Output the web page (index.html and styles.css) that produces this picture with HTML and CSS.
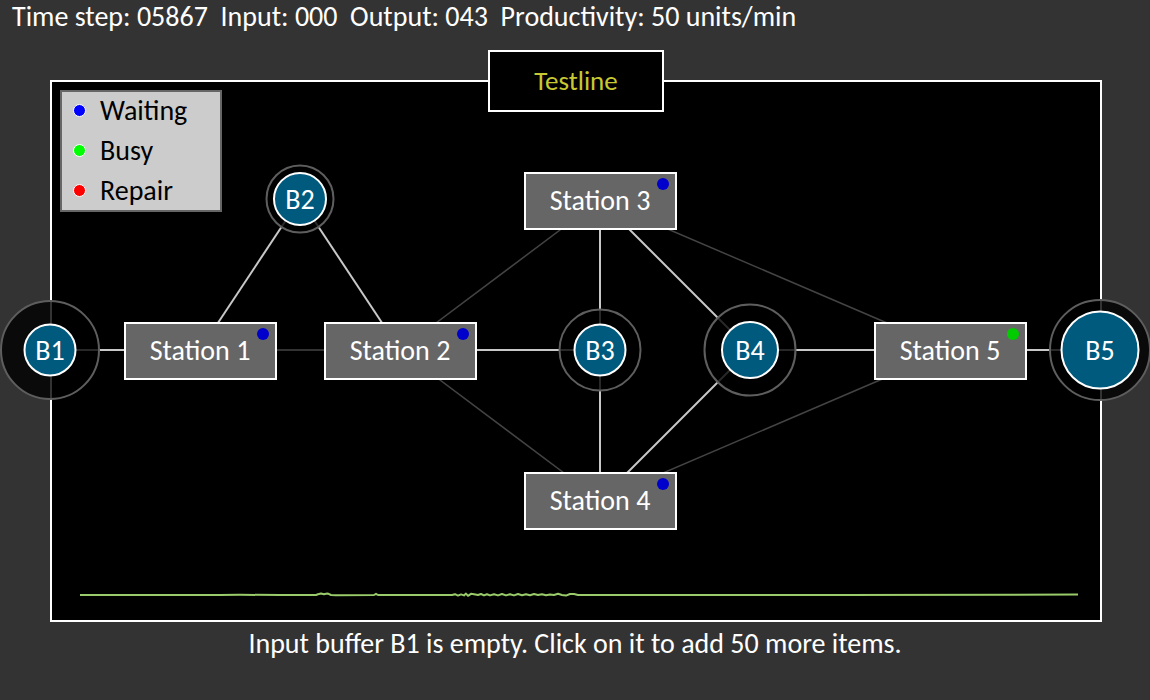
FILE: index.html
```html
<!DOCTYPE html>
<html>
<head>
<meta charset="utf-8">
<link rel="stylesheet" href="styles.css">
</head>
<body>
<div class="app">
  <div class="status">Time step: 05867&nbsp; Input: 000&nbsp; Output: 043&nbsp; Productivity: 50 units/min</div>
  <div class="stage">
    <div class="frame">
      <svg class="chart" width="998" height="12" viewBox="0 0 998 12">
        <polyline class="chart-line" points="0,6 140,6 160,5.8 200,6 236,6 238,5.2 241,4.6 244,5.2 246,4.8 248,4.6 251,6 256,6.2 294,6 296,4.8 298,6 372,6 375,5.2 378,6.6 381,5.4 384,6.4 386,4.6 388,6.8 391,4.8 394,5.2 398,6 401,5 404,6.4 407,5.2 410,6.4 414,5.2 418,6.4 422,5 426,6.4 430,5.2 434,6.4 438,5 442,6.2 446,5.2 450,6.2 454,5 458,6 462,5.2 466,6.2 470,5.4 474,6 478,4.8 482,6 486,6.6 490,5 494,5 498,6 560,6 700,6 760,6 998,5.6"/>
      </svg>
    </div>
    <svg class="diagram" width="1150" height="590" viewBox="0 40 1150 590">
      <g class="dark">
        <line x1="277" y1="350" x2="325" y2="350"/>
        <line x1="400" y1="350" x2="600" y2="200"/>
        <line x1="400" y1="350" x2="600" y2="500"/>
        <line x1="600" y1="200" x2="950" y2="350"/>
        <line x1="600" y1="500" x2="950" y2="350"/>
      </g>
      <g class="light">
        <line x1="50" y1="350" x2="125" y2="350"/>
        <line x1="200" y1="350" x2="300" y2="199"/>
        <line x1="300" y1="199" x2="400" y2="350"/>
        <line x1="477" y1="350" x2="600" y2="350"/>
        <line x1="600" y1="229" x2="600" y2="472"/>
        <line x1="600" y1="200" x2="750" y2="350"/>
        <line x1="750" y1="350" x2="600" y2="500"/>
        <line x1="750" y1="350" x2="875" y2="350"/>
        <line x1="1027" y1="350" x2="1100" y2="350"/>
      </g>

      <g class="buffer">
        <circle class="outer" cx="50" cy="350" r="49"/>
        <circle class="inner" cx="50" cy="350" r="25.5"/>
        <text x="50" y="350">B1</text>
      </g>
      <g class="buffer">
        <circle class="outer" cx="300" cy="199" r="33.5"/>
        <circle class="inner" cx="300" cy="199" r="26"/>
        <text x="300" y="199">B2</text>
      </g>
      <g class="buffer">
        <circle class="outer" cx="600" cy="350" r="40.5"/>
        <circle class="inner" cx="600" cy="350" r="25.5"/>
        <text x="600" y="350">B3</text>
      </g>
      <g class="buffer">
        <circle class="outer" cx="750" cy="350" r="45.5"/>
        <circle class="inner" cx="750" cy="350" r="28"/>
        <text x="750" y="350">B4</text>
      </g>
      <g class="buffer">
        <circle class="outer" cx="1100" cy="350" r="50"/>
        <circle class="inner" cx="1100" cy="350" r="38.5"/>
        <text x="1100" y="350">B5</text>
      </g>

      <g class="station">
        <rect x="125" y="323" width="151" height="56"/>
        <text x="200" y="350">Station 1</text>
        <circle class="dot waiting" cx="263" cy="334" r="6"/>
      </g>
      <g class="station">
        <rect x="325" y="323" width="151" height="56"/>
        <text x="400" y="350">Station 2</text>
        <circle class="dot waiting" cx="463" cy="334" r="6"/>
      </g>
      <g class="station">
        <rect x="525" y="173" width="151" height="56"/>
        <text x="600" y="200">Station 3</text>
        <circle class="dot waiting" cx="663" cy="184" r="6"/>
      </g>
      <g class="station">
        <rect x="525" y="473" width="151" height="56"/>
        <text x="600" y="500">Station 4</text>
        <circle class="dot waiting" cx="663" cy="484" r="6"/>
      </g>
      <g class="station">
        <rect x="875" y="323" width="151" height="56"/>
        <text x="950" y="350">Station 5</text>
        <circle class="dot busy" cx="1013" cy="334" r="6"/>
      </g>
    </svg>
    <div class="title">Testline</div>
    <div class="legend">
      <div class="legend-item"><span class="ldot waiting-bg"></span>Waiting</div>
      <div class="legend-item"><span class="ldot busy-bg"></span>Busy</div>
      <div class="legend-item"><span class="ldot repair-bg"></span>Repair</div>
    </div>
  </div>
  <div class="message">Input buffer B1 is empty. Click on it to add 50 more items.</div>
</div>
</body>
</html>
```

FILE: styles.css
```css
html, body {
  margin: 0;
  padding: 0;
  background: #333333;
}
body {
  width: 1150px;
  height: 700px;
  overflow: hidden;
  font-family: Carlito, Calibri, Lato, "Open Sans", sans-serif;
  color: #ffffff;
}
.app {
  display: flex;
  flex-direction: column;
}
.status {
  height: 40px;
  box-sizing: border-box;
  padding: 0 0 0 12px;
  font-size: 28px;
  line-height: 34px;
  white-space: pre;
}
.stage {
  position: relative;
  height: 582px;
}
.frame {
  margin: 40px 0 0 50px;
  width: 1052px;
  height: 542px;
  box-sizing: border-box;
  border: 2px solid #ffffff;
  background: #000000;
  display: flex;
  flex-direction: column;
  justify-content: flex-end;
  padding: 0 0 19px 28px;
}
.chart {
  display: block;
}
.chart-line {
  fill: none;
  stroke: #9acb6a;
  stroke-width: 2;
  stroke-linejoin: round;
}
.diagram {
  position: absolute;
  left: 0;
  top: 0;
  overflow: visible;
}
.dark line {
  stroke: #444444;
  stroke-width: 1.5;
}
.light line {
  stroke: #c8c8c8;
  stroke-width: 2;
}
.buffer .outer {
  fill: rgba(0, 0, 0, 0.8);
  stroke: #5e5e5e;
  stroke-width: 2;
}
.buffer .inner {
  fill: #005a7e;
  stroke: #ffffff;
  stroke-width: 2;
}
.diagram text {
  fill: #ffffff;
  font-family: Carlito, Calibri, Lato, "Open Sans", sans-serif;
  font-size: 28px;
  text-anchor: middle;
  dominant-baseline: central;
}
.station rect {
  fill: #666666;
  stroke: #ffffff;
  stroke-width: 2;
}
.dot.waiting { fill: #0000cc; }
.dot.busy { fill: #00cc00; }
.title {
  position: absolute;
  left: 488px;
  top: 10px;
  width: 176px;
  height: 62px;
  box-sizing: border-box;
  border: 2px solid #ffffff;
  background: #000000;
  color: #c8c832;
  font-size: 27px;
  display: flex;
  align-items: center;
  justify-content: center;
  padding-bottom: 2px;
}
.legend {
  position: absolute;
  left: 60px;
  top: 50px;
  width: 162px;
  height: 122px;
  box-sizing: border-box;
  border: 2px solid #666666;
  background: #cccccc;
  color: #000000;
  display: flex;
  flex-direction: column;
  gap: 4px;
  padding: 0 0 0 11px;
  font-size: 28px;
}
.legend-item {
  height: 36px;
  display: flex;
  align-items: center;
}
.ldot {
  width: 11px;
  height: 11px;
  border-radius: 50%;
  border: 1.5px solid #ffffff;
  margin-right: 14px;
  flex: none;
}
.waiting-bg { background: #0000ff; }
.busy-bg { background: #00ff00; }
.repair-bg { background: #ff0000; }
.message {
  text-align: center;
  font-size: 28px;
  line-height: 44px;
  height: 44px;
}
```
